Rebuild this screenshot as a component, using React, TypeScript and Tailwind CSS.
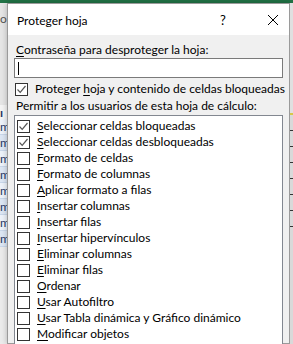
import React from 'react';

const items: { label: string; key: number; checked?: boolean }[] = [
  { label: 'Seleccionar celdas bloqueadas', key: 0, checked: true },
  { label: 'Seleccionar celdas desbloqueadas', key: 0, checked: true },
  { label: 'Formato de celdas', key: 0 },
  { label: 'Formato de columnas', key: 0 },
  { label: 'Aplicar formato a filas', key: 0 },
  { label: 'Insertar columnas', key: 0 },
  { label: 'Insertar filas', key: 0 },
  { label: 'Insertar hipervínculos', key: 0 },
  { label: 'Eliminar columnas', key: 0 },
  { label: 'Eliminar filas', key: 0 },
  { label: 'Ordenar', key: 0 },
  { label: 'Usar Autofiltro', key: 0 },
  { label: 'Usar Tabla dinámica y Gráfico dinámico', key: 0 },
  { label: 'Modificar objetos', key: 0 },
  { label: 'Modificar escenarios', key: 0 },
];

const Check = ({ checked }: { checked?: boolean }) => (
  <span className="w-[13px] h-[13px] border border-[#333] bg-white flex items-center justify-center shrink-0">
    {checked && (
      <svg width="11" height="11" viewBox="0 0 11 11">
        <path d="M1.5 5.5 L4.2 8.3 L9.5 2" fill="none" stroke="#555" strokeWidth="1.2" />
      </svg>
    )}
  </span>
);

const Label = ({ text, at }: { text: string; at: number }) => (
  <span className="whitespace-nowrap">
    {text.slice(0, at)}
    <span className="underline underline-offset-2">{text[at]}</span>
    {text.slice(at + 1)}
  </span>
);

export default function App() {
  return (
    <div
      className="w-[293px] h-[344px] overflow-hidden bg-[#e6e6e6] flex flex-col text-[12px] leading-[16px] text-black"
      style={{ fontFamily: 'Lato, "Segoe UI", sans-serif' }}
    >
      {/* Excel ribbon edge */}
      <div className="h-[3px] bg-[#217346] shrink-0" />

      <div className="flex flex-1 min-h-0">
        {/* sheet behind, left */}
        <div className="w-[7px] shrink-0 flex flex-col text-[#1f3864] overflow-hidden">
          <div className="h-[30px] pt-[8px] text-[#555]">o</div>
          <div className="h-[72px]" />
          <div className="h-[14px] bg-[#f5f5f5] font-bold">ı</div>
          {[0, 1, 2, 3, 4, 5, 6, 7].map((i) => (
            <div key={i} className={`h-[16px] border-b border-[#c9d7ea] ${i % 2 ? 'bg-[#dde7f4]' : 'bg-[#eef3fa]'}`}>
              m
            </div>
          ))}
          <div className="flex-1 bg-[#ececec]" />
        </div>

        {/* dialog */}
        <div className="flex-1 border border-[#9a9a9a] bg-[#f0f0f0] flex flex-col min-w-0 shadow-[0_0_6px_rgba(0,0,0,0.25)]">
          <div className="h-[31px] bg-white flex items-center shrink-0">
            <span className="pl-[9px] pt-[2px] flex-1">Proteger hoja</span>
            <span className="w-[12px] mr-[35px] text-[13px]">?</span>
            <svg width="12" height="12" viewBox="0 0 12 12" className="mr-[10px]">
              <path d="M1 1 L11 11 M11 1 L1 11" stroke="#000" strokeWidth="1" />
            </svg>
          </div>

          <div className="flex flex-col px-[6px] pt-[8px]">
            <div className="pl-[2px] h-[14px] leading-[14px]">
              <Label text="Contraseña para desproteger la hoja:" at={0} />
            </div>
            <div className="mt-[1px] h-[20px] bg-white border border-[#7a7a7a] flex items-center pl-[3px] shrink-0">
              <span className="w-px h-[13px] bg-black" />
            </div>
            <div className="mt-[4px] flex items-center gap-[7px] h-[14px] pl-[1px]">
              <Check checked />
              <Label text="Proteger hoja y contenido de celdas bloqueadas" at={9} />
            </div>
            <div className="mt-[2px] pl-[2px] h-[16px]">
              <span className="whitespace-nowrap">Permitir a los usuarios de esta hoja de cálculo:</span>
            </div>
            <div className="mt-[1px] bg-white border border-[#828790] pt-[2px] pl-[2px] flex flex-col h-[260px] overflow-hidden">
              {items.map((it) => (
                <div key={it.label} className="flex items-center gap-[7px] h-[16px] shrink-0">
                  <Check checked={it.checked} />
                  <Label text={it.label} at={it.key} />
                </div>
              ))}
            </div>
          </div>
        </div>

        {/* sheet behind, right */}
        <div className="w-[3px] shrink-0 bg-[#d9d9d9] flex flex-col">
          <div className="h-[110px] bg-[#e0e0e0]" />
          <div className="h-[2px] bg-[#d6c84a]" />
          {[0, 1, 2, 3, 4, 5, 6].map((i) => (
            <div key={i} className="h-[16px] border-b border-[#333]" />
          ))}
        </div>
      </div>
    </div>
  );
}
